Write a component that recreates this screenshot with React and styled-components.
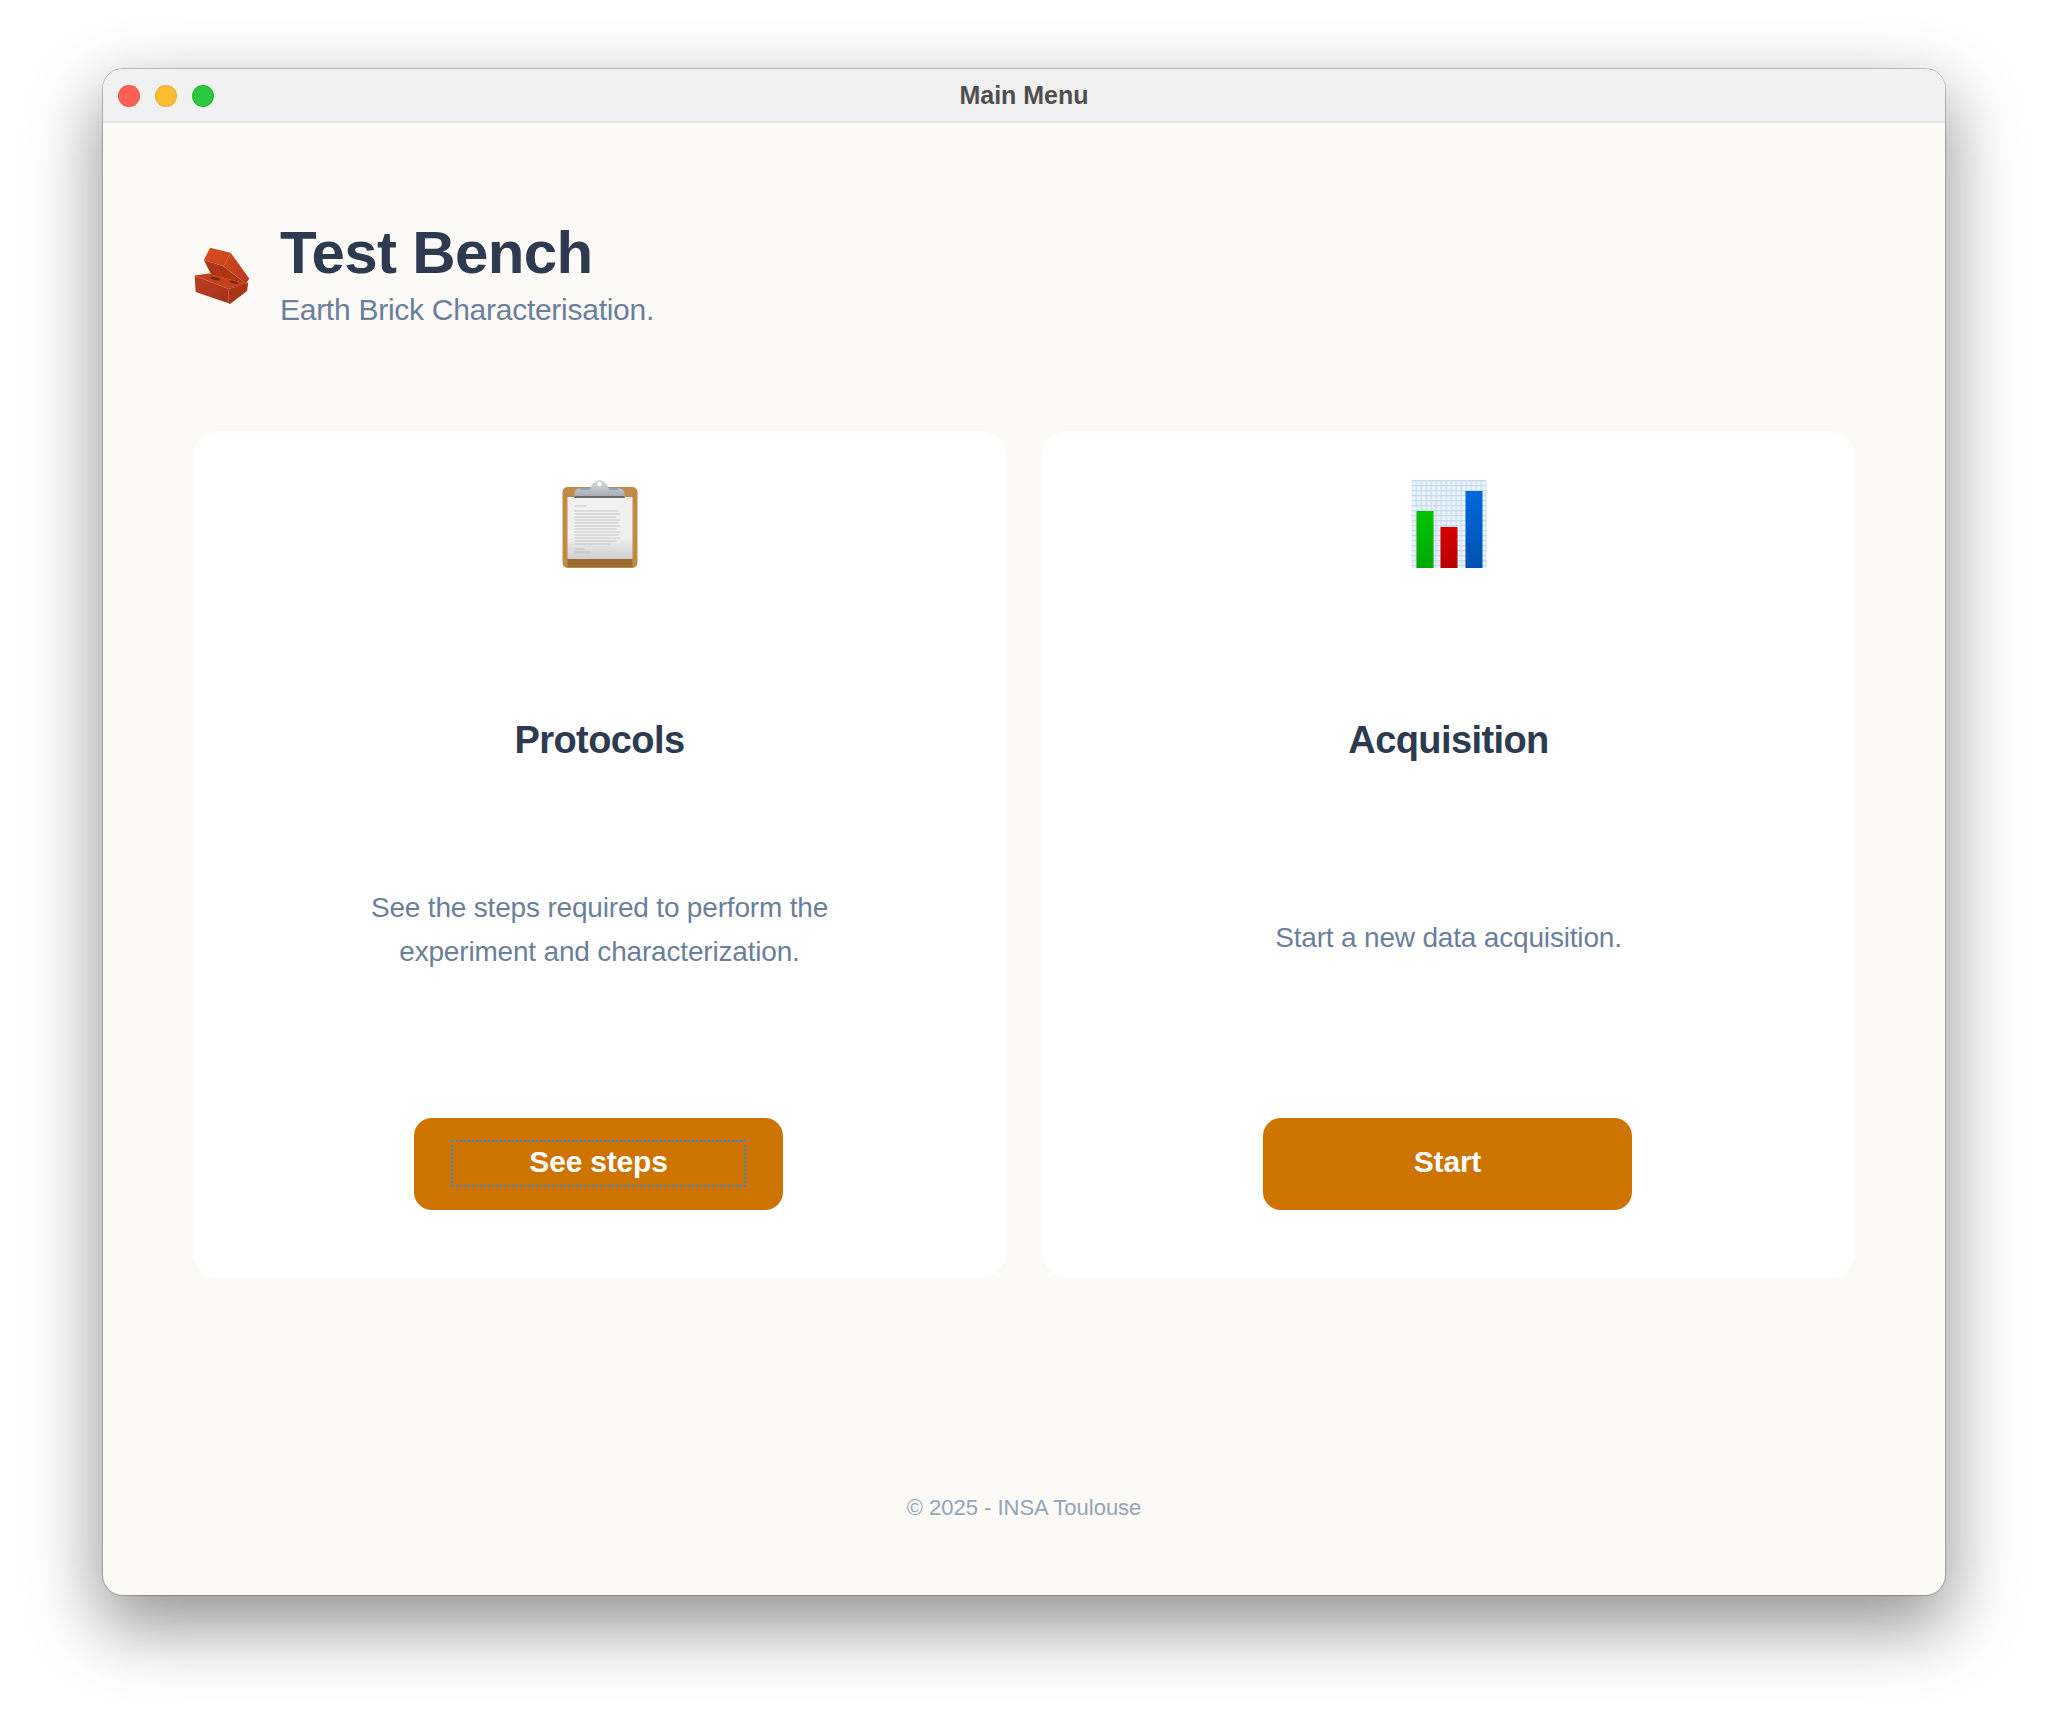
import React from "react";
import styled, { createGlobalStyle } from "styled-components";

const Global = createGlobalStyle`
  html, body { margin: 0; padding: 0; background: #fff; }
  body { font-family: "Liberation Sans", Arial, sans-serif; }
`;
const Page = styled.div`
  box-sizing: border-box;
  width: 2048px;
  height: 1731px;
  padding: 69px 103px 136px;
`;
const Window = styled.div`
  height: 100%;
  border-radius: 20px;
  background: #fbfaf7;
  box-shadow: 0 0 0 1px rgba(0, 0, 0, 0.2), 0 28px 70px 4px rgba(0, 0, 0, 0.42);
  display: flex;
  flex-direction: column;
  overflow: hidden;
`;
const TitleBar = styled.div`
  position: relative;
  flex: 0 0 54px;
  box-sizing: border-box;
  background: #f1f1f1;
  border-bottom: 2px solid #e3e2e0;
  display: flex;
  align-items: center;
  justify-content: center;
  font-size: 25px;
  font-weight: 700;
  color: #4f4f4f;
`;
const Lights = styled.div`
  position: absolute;
  left: 15px;
  top: 16px;
  display: flex;
  gap: 15px;
`;
const Light = styled.span`
  width: 22px;
  height: 22px;
  border-radius: 50%;
  background: ${(p) => p.$c};
  box-shadow: inset 0 0 0 1px rgba(0, 0, 0, 0.08);
`;
const Body = styled.div`
  flex: 1;
  display: flex;
  flex-direction: column;
  padding: 0 90px;
`;
const Header = styled.header`
  display: flex;
  align-items: flex-start;
  gap: 26px;
  padding-top: 99px;
  height: 308px;
  box-sizing: border-box;
`;
const BrickBox = styled.div`
  width: 61px;
  height: 70px;
  margin-top: 18px;
`;
const HeadText = styled.div`
  display: flex;
  flex-direction: column;
`;
const Title = styled.h1`
  margin: 0;
  font-size: 60px;
  line-height: 62px;
  font-weight: 700;
  letter-spacing: -0.65px;
  color: #2d3a50;
`;
const Subtitle = styled.p`
  margin: 8px 0 0;
  font-size: 30px;
  line-height: 36px;
  letter-spacing: -0.27px;
  color: #6b7f9c;
`;
const Cards = styled.div`
  display: grid;
  grid-template-columns: 1fr 1fr;
  gap: 36px;
`;
const Card = styled.section`
  height: 847px;
  box-sizing: border-box;
  background: #fff;
  border-radius: 26px;
  padding: 34px 0 68px;
  display: flex;
  flex-direction: column;
  align-items: center;
`;
const IconBox = styled.div`
  width: 110px;
  height: 110px;
`;
const CardTitle = styled.h2`
  margin: 135px 0 0;
  font-size: 38px;
  line-height: 60px;
  font-weight: 700;
  letter-spacing: -0.6px;
  color: #2d3a50;
`;
const Desc = styled.p`
  flex: 1;
  margin: 0 0 ${(p) => p.$lift}px;
  display: flex;
  align-items: center;
  text-align: center;
  font-size: 28px;
  line-height: 44px;
  letter-spacing: -0.18px;
  color: #6b7f9c;
`;
const Button = styled.button`
  width: 369px;
  height: 92px;
  margin-right: 2px;
  border: 0;
  border-radius: 18px;
  background: #cd7300;
  color: #fff;
  font: 700 30px "Liberation Sans", Arial, sans-serif;
  letter-spacing: -0.2px;
  display: flex;
  align-items: center;
  justify-content: center;
  padding: 0 0 4px;
`;
const FocusRing = styled.span`
  box-sizing: border-box;
  width: 295px;
  height: 47px;
  margin-top: 3px;
  padding-bottom: 4px;
  border: 2px dotted #2a8ee8;
  display: flex;
  align-items: center;
  justify-content: center;
`;
const Footer = styled.footer`
  margin-top: auto;
  padding-bottom: 72px;
  text-align: center;
  font-size: 22px;
  line-height: 30px;
  color: #94a3b8;
`;

const Brick = () => (
  <svg width="61" height="70" viewBox="3 0 61 70">
    <defs>
      <linearGradient id="brickEnd" x1="0" y1="0" x2="1" y2="1">
        <stop offset="0" stopColor="#d8511f" />
        <stop offset="1" stopColor="#c8431c" />
      </linearGradient>
      <linearGradient id="brickSide" x1="0" y1="0" x2="1" y2="1">
        <stop offset="0" stopColor="#cf4a1e" />
        <stop offset="1" stopColor="#b7391a" />
      </linearGradient>
      <linearGradient id="brickFront" x1="0" y1="0" x2="1" y2="1">
        <stop offset="0" stopColor="#bd3f1d" />
        <stop offset="1" stopColor="#a5301a" />
      </linearGradient>
      <filter id="soft" x="-5%" y="-5%" width="110%" height="110%">
        <feGaussianBlur stdDeviation="0.35" />
      </filter>
    </defs>
    <g filter="url(#soft)" transform="translate(0.5 0.5) scale(1.03)">
      <polygon points="13,19 32,25 54,42 20,33" fill="#ad3519" />
      <polygon points="4,34 18,32 55,42 37,47" fill="#c2411c" />
      <ellipse cx="24" cy="37" rx="5" ry="1.4" fill="#7a2511" transform="rotate(12 24 37)" />
      <ellipse cx="42" cy="40.5" rx="4.5" ry="1.2" fill="#7a2511" transform="rotate(14 42 40.5)" />
      <polygon points="4,34 37,47 37,61 5,50" fill="url(#brickFront)" />
      <polygon points="37,47 56,41 55,49 38,62 37,61" fill="#a93419" />
      <polygon points="39,12 57,37 54,42 32,25" fill="url(#brickSide)" />
      <polygon points="19,7 39,12 32,25 13,19" fill="url(#brickEnd)" />
    </g>
  </svg>
);

const Clipboard = () => (
  <svg width="110" height="110" viewBox="4.5 0 110 110">
    <defs>
      <linearGradient id="paper" x1="0" y1="0" x2="0" y2="1">
        <stop offset="0" stopColor="#f2f2f2" />
        <stop offset="0.65" stopColor="#f0f0f0" />
        <stop offset="1" stopColor="#cfcfcf" />
      </linearGradient>
      <linearGradient id="clip" x1="0" y1="0" x2="0" y2="1">
        <stop offset="0" stopColor="#dadde0" />
        <stop offset="1" stopColor="#a3a7ab" />
      </linearGradient>
    </defs>
    <rect x="22" y="22" width="75" height="81" rx="5" fill="#c08a47" />
    <rect x="27" y="92" width="65" height="10" fill="#9d6c33" />
    <rect x="27" y="32" width="65" height="62" fill="url(#paper)" />
    <path d="M34 33 V28 Q34 24 40 23 H50 Q53 15 59 15 Q65 15 68 23 H78 Q84 24 84 28 V33 Z" fill="url(#clip)" />
    <path d="M34 31 H84 V33 H34 Z" fill="#6c6a68" />
    <path d="M40 23 H50 L49 25 H40 Z M68 23 H78 L78 25 H69 Z" fill="#7fa7cf" />
    <circle cx="59" cy="19" r="2.2" fill="#fff" />
    <g stroke="#a5a5a5" strokeWidth="0.7" opacity="0.75">
      <path d="M34 41 H46" />
      <path d="M34 46 H78 M34 49 H80 M34 52 H76 M34 55 H80 M34 58 H78 M34 61 H80 M34 64 H76 M34 67 H80 M34 70 H78 M34 73 H80 M34 76 H76 M34 79 H70" />
      <path d="M34 84 H44 M34 87 H50" />
    </g>
  </svg>
);

const Chart = () => (
  <svg width="110" height="110" viewBox="-1.5 0 110 110">
    <defs>
      <pattern id="grid" width="5" height="5" patternUnits="userSpaceOnUse">
        <rect width="5" height="5" fill="#eef4fa" />
        <path d="M0 0.7 H5 M0.7 0 V5" stroke="#c4dcf0" strokeWidth="1.3" />
      </pattern>
      <linearGradient id="g" x1="0" y1="0" x2="0" y2="1">
        <stop offset="0" stopColor="#00c400" />
        <stop offset="1" stopColor="#00a800" />
      </linearGradient>
      <linearGradient id="r" x1="0" y1="0" x2="0" y2="1">
        <stop offset="0" stopColor="#d60000" />
        <stop offset="1" stopColor="#b80000" />
      </linearGradient>
      <linearGradient id="b" x1="0" y1="0" x2="0" y2="1">
        <stop offset="0" stopColor="#0068dc" />
        <stop offset="1" stopColor="#0052b0" />
      </linearGradient>
    </defs>
    <rect x="16" y="15" width="75" height="88" fill="url(#grid)" />
    <rect x="21" y="46" width="17" height="57" fill="url(#g)" />
    <rect x="45" y="62" width="17" height="41" fill="url(#r)" />
    <rect x="70" y="26" width="17" height="77" fill="url(#b)" />
  </svg>
);

export default function App() {
  return (
    <Page>
      <Global />
      <Window>
        <TitleBar>
          <Lights>
            <Light $c="#ff5f57" />
            <Light $c="#febc2e" />
            <Light $c="#28c840" />
          </Lights>
          Main Menu
        </TitleBar>
        <Body>
          <Header>
            <BrickBox><Brick /></BrickBox>
            <HeadText>
              <Title>Test Bench</Title>
              <Subtitle>Earth Brick Characterisation.</Subtitle>
            </HeadText>
          </Header>
          <Cards>
            <Card>
              <IconBox><Clipboard /></IconBox>
              <CardTitle>Protocols</CardTitle>
              <Desc $lift={29}>See the steps required to perform the<br />experiment and characterization.</Desc>
              <Button><FocusRing>See steps</FocusRing></Button>
            </Card>
            <Card>
              <IconBox><Chart /></IconBox>
              <CardTitle>Acquisition</CardTitle>
              <Desc $lift={13}>Start a new data acquisition.</Desc>
              <Button>Start</Button>
            </Card>
          </Cards>
          <Footer>© 2025 - INSA Toulouse</Footer>
        </Body>
      </Window>
    </Page>
  );
}
